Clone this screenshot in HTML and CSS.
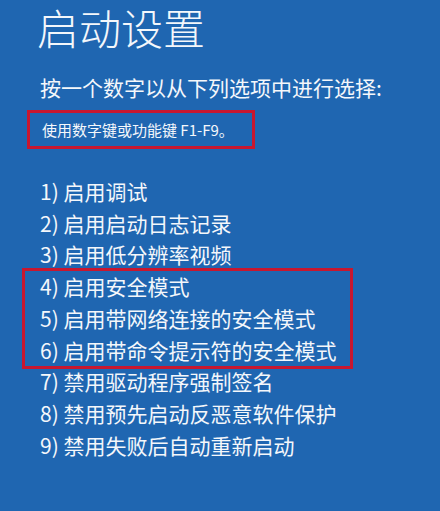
FILE: index.html
```html
<!DOCTYPE html>
<html lang="zh-CN">
<head>
<meta charset="utf-8">
<title>启动设置</title>
<link rel="stylesheet" href="styles.css">
</head>
<body>
<main class="screen">
  <h1 class="title">启动设置</h1>
  <p class="prompt">按一个数字以从下列选项中进行选择:</p>
  <div class="hint-box">使用数字键或功能键 F1-F9。</div>
  <ol class="options">
    <li>1) 启用调试</li>
    <li>2) 启用启动日志记录</li>
    <li>3) 启用低分辨率视频</li>
    <li class="group">
      <ol class="safe-box">
        <li>4) 启用安全模式</li>
        <li>5) 启用带网络连接的安全模式</li>
        <li>6) 启用带命令提示符的安全模式</li>
      </ol>
    </li>
    <li>7) 禁用驱动程序强制签名</li>
    <li>8) 禁用预先启动反恶意软件保护</li>
    <li>9) 禁用失败后自动重新启动</li>
  </ol>
</main>
</body>
</html>
```
FILE: styles.css
```css
html, body {
  margin: 0;
  padding: 0;
  background: #1f66b1;
}
body {
  width: 440px;
  height: 511px;
  overflow: hidden;
  color: #f4f7fb;
  font-family: "Noto Sans CJK SC", "Noto Sans", sans-serif;
}
.screen {
  padding: 0 0 0 40px;
}
.title {
  margin: 0 0 0 -3px;
  font-size: 42px;
  line-height: 53px;
  font-weight: 300;
}
.prompt {
  margin: 20px 0 0 0;
  font-size: 21px;
  line-height: 28px;
  font-weight: 400;
}
.hint-box {
  box-sizing: border-box;
  margin: 9px 0 0 -13px;
  width: 228px;
  height: 39px;
  border: 3px solid #c8172f;
  padding-left: 12px;
  font-size: 15px;
  line-height: 33px;
}
.options {
  list-style: none;
  margin: 27px 0 0 0;
  padding: 0;
  font-size: 21px;
  line-height: 31.7px;
}
.options li {
  white-space: nowrap;
}
.group {
  margin: -3px 0 -3px -18px;
}
.safe-box {
  list-style: none;
  margin: 0;
  padding: 0 0 0 15px;
  width: 310px;
  border: 3px solid #c8172f;
}
```
